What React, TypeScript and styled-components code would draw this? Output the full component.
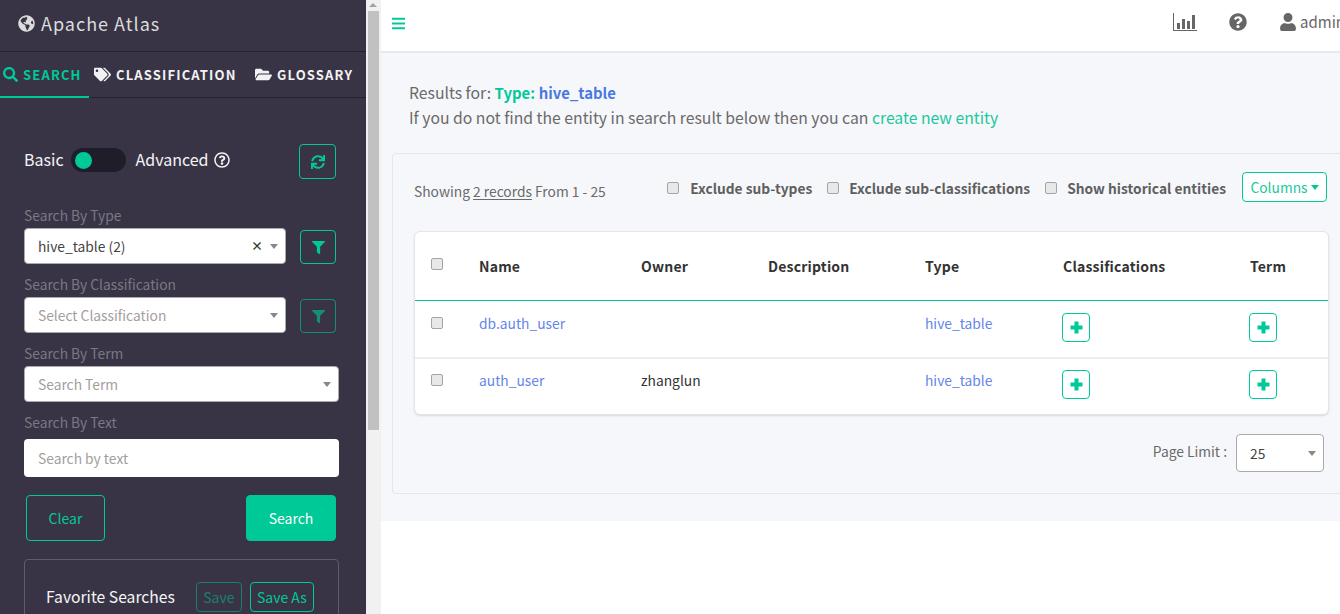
import styled, { createGlobalStyle } from "styled-components";
import {
  FaBars,
  FaFilter,
  FaFolderOpen,
  FaGlobeAmericas,
  FaQuestionCircle,
  FaRegQuestionCircle,
  FaSearch,
  FaSync,
  FaTags,
  FaUser,
} from "react-icons/fa";

const green = "#00c998";
const sidebarBg = "#383446";
const linkBlue = "#6485ea";
const grayText = "#6a6a6a";

const GlobalStyle = createGlobalStyle`
  html, body {
    margin: 0;
    padding: 0;
    height: 100%;
    overflow: hidden;
    background: #fff;
  }
  * {
    box-sizing: border-box;
  }
  body {
    font-family: "Noto Sans CJK SC", "Noto Sans", "Liberation Sans", sans-serif;
    font-size: 14px;
    line-height: 22px;
    color: ${grayText};
  }
`;

const Page = styled.div`
  display: flex;
  width: 1340px;
  height: 614px;
  overflow: hidden;
`;

const Sidebar = styled.aside`
  flex: 0 0 366px;
  height: 614px;
  overflow: hidden;
  background: ${sidebarBg};
  color: #fff;
`;

const Logo = styled.div`
  display: flex;
  align-items: center;
  gap: 6px;
  height: 52px;
  padding: 0 0 5px 18px;
  border-bottom: 1px solid #252330;
  color: #dcdcdc;
  font-size: 18px;
  letter-spacing: 1px;
  svg {
    font-size: 17px;
  }
`;

const Tabs = styled.nav`
  display: flex;
  height: 46px;
  border-bottom: 1px solid #252330;
`;

const Tab = styled.div<{ $active?: boolean; $width: number; $left: number; $icon: number }>`
  display: flex;
  align-items: center;
  gap: 5px;
  width: ${(p) => p.$width}px;
  height: 46px;
  padding: 1px 0 0 ${(p) => p.$left}px;
  font-size: 13px;
  font-weight: 700;
  letter-spacing: 1.15px;
  white-space: nowrap;
  color: ${(p) => (p.$active ? green : "#f2f2f2")};
  border-bottom: 2px solid ${(p) => (p.$active ? green : "transparent")};
  svg {
    font-size: ${(p) => p.$icon}px;
    flex: none;
  }
`;

const SideBody = styled.div`
  padding: 46px 27px 0 24px;
`;

const ToggleRow = styled.div`
  display: flex;
  align-items: center;
  height: 32px;
  margin-bottom: 28px;
  font-size: 16px;
  color: #f4f4f4;
`;

const ToggleLabel = styled.span`
  margin-bottom: 2px;
`;

const Toggle = styled.div`
  display: flex;
  align-items: center;
  width: 55px;
  height: 24px;
  margin: 0 10px 0 7px;
  padding-left: 4px;
  border-radius: 12px;
  background: #1f1d2a;
  &::before {
    content: "";
    width: 17px;
    height: 17px;
    border-radius: 50%;
    background: ${green};
  }
`;

const HelpIcon = styled(FaRegQuestionCircle)`
  margin-left: 5px;
  font-size: 16px;
`;

const IconButton = styled.button<{ $dim?: boolean }>`
  display: flex;
  align-items: center;
  justify-content: center;
  flex: none;
  width: 36px;
  height: 34px;
  margin-left: 14px;
  padding: 0;
  border: 1px solid ${green};
  border-radius: 4px;
  background: transparent;
  color: ${green};
  font-size: 13px;
  opacity: ${(p) => (p.$dim ? 0.6 : 1)};
`;

const RefreshButton = styled(IconButton)`
  align-self: flex-start;
  width: 37px;
  height: 35px;
  margin: 0 3px 0 auto;
  font-size: 14px;
`;

const FieldLabel = styled.div`
  height: 22px;
  font-size: 13.8px;
  line-height: 22px;
  color: #7b7882;
`;

const FieldRow = styled.div`
  display: flex;
  align-items: flex-end;
  margin: 2px 0 9px;
`;

const Select = styled.div<{ $width?: number }>`
  display: flex;
  align-items: center;
  flex: none;
  width: ${(p) => p.$width ?? 262}px;
  height: 36px;
  padding: 0 7px 0 13px;
  border: 1px solid #aaa;
  border-radius: 4px;
  background: #fff;
  font-size: 13.8px;
  color: #444;
`;

const SelectValue = styled.span<{ $placeholder?: boolean }>`
  flex: 1;
  color: ${(p) => (p.$placeholder ? "#a29e9e" : "#444")};
`;

const ClearMark = styled.span`
  margin-right: 7px;
  font-size: 12px;
  font-weight: 700;
  color: #333;
`;

const Caret = styled.span`
  width: 0;
  height: 0;
  border-left: 4px solid transparent;
  border-right: 4px solid transparent;
  border-top: 5px solid #888;
`;

const TextInput = styled.input`
  display: block;
  width: 315px;
  height: 38px;
  margin-top: 6px;
  padding: 0 14px;
  border: 0;
  border-radius: 4px;
  background: #fff;
  font: inherit;
  font-size: 13.8px;
  &::placeholder {
    color: #a29e9e;
    opacity: 1;
  }
`;

const SearchActions = styled.div`
  display: flex;
  justify-content: space-between;
  width: 310px;
  margin: 18px 0 18px 2px;
`;

const ActionButton = styled.button<{ $solid?: boolean }>`
  width: ${(p) => (p.$solid ? 90 : 79)}px;
  height: 46px;
  padding: 0;
  border: 1px solid ${green};
  border-radius: 4px;
  background: ${(p) => (p.$solid ? green : "transparent")};
  color: ${(p) => (p.$solid ? "#fff" : green)};
  font: inherit;
  font-size: 14px;
`;

const FavoritePanel = styled.section`
  display: flex;
  align-items: center;
  width: 315px;
  height: 80px;
  padding: 0 0 4px 21px;
  border: 1px solid #5f5d66;
  border-radius: 4px;
  color: #f6f6f6;
  font-size: 15.7px;
`;

const SmallButton = styled.button<{ $dim?: boolean; $width: number }>`
  width: ${(p) => p.$width}px;
  height: 30px;
  margin-left: ${(p) => (p.$dim ? 21 : 8)}px;
  padding: 0;
  border: 1px solid ${green};
  border-radius: 4px;
  background: transparent;
  color: ${green};
  font: inherit;
  font-size: 14px;
  opacity: ${(p) => (p.$dim ? 0.5 : 1)};
`;

const Scrollbar = styled.div`
  position: relative;
  flex: 0 0 15px;
  height: 614px;
  padding: 11px 2px 0 2px;
  background: #f1f1f1;
  &::before {
    content: "";
    position: absolute;
    top: 3px;
    left: 3px;
    border-left: 4px solid transparent;
    border-right: 4px solid transparent;
    border-bottom: 4px solid #a3a3a3;
  }
`;

const ScrollThumb = styled.div`
  height: 419px;
  background: #c1c1c1;
`;

const Main = styled.main`
  flex: 1;
  min-width: 0;
  overflow: hidden;
  background: #fff;
`;

const TopBar = styled.header`
  display: flex;
  align-items: center;
  height: 53px;
  padding: 0 0 7px 10px;
  border-bottom: 2px solid #e8e8ee;
  color: #666;
`;

const MenuIcon = styled(FaBars)`
  margin: 3px auto 0 0;
  color: ${green};
  font-size: 15px;
`;

const TopIcon = styled.span<{ $right: number }>`
  display: flex;
  margin-right: ${(p) => p.$right}px;
  font-size: 18px;
`;

const Admin = styled.span`
  display: flex;
  align-items: center;
  gap: 3px;
  width: 61px;
  flex: none;
  font-size: 15px;
  white-space: nowrap;
  svg {
    flex: none;
    font-size: 18px;
  }
`;

const Content = styled.div`
  height: 468px;
  padding: 27px 0 0 11px;
  background: #f6f7fb;
`;

const ResultInfo = styled.div`
  padding-left: 17px;
  font-size: 15.75px;
  line-height: 25px;
  margin-bottom: 23px;
`;

const TypeKey = styled.strong`
  color: ${green};
  font-size: 14.9px;
  font-weight: 700;
`;

const TypeValue = styled.strong`
  color: #4a78e2;
  font-size: 14.9px;
  font-weight: 700;
`;

const GreenLink = styled.a`
  color: #1cc79d;
`;

const ResultCard = styled.section`
  width: 970px;
  height: 341px;
  padding: 18px 0 0 21px;
  border: 1px solid #e5e5eb;
  border-radius: 4px;
`;

const Toolbar = styled.div`
  display: flex;
  align-items: flex-start;
  width: 913px;
  height: 59px;
`;

const Showing = styled.div`
  margin-top: 8px;
  margin-right: auto;
  font-size: 13.8px;
  u {
    text-underline-offset: 2px;
  }
`;

const CheckLabel = styled.label`
  display: flex;
  align-items: center;
  height: 32px;
  margin-right: 15px;
  font-size: 13.75px;
  font-weight: 700;
  color: #5f5f5f;
  white-space: nowrap;
`;

const Check = styled.input.attrs({ type: "checkbox" })<{ $gap?: number; $top?: number }>`
  appearance: none;
  display: block;
  flex: none;
  width: 12px;
  height: 12px;
  margin: ${(p) => p.$top ?? 0}px ${(p) => p.$gap ?? 0}px 0 0;
  border: 1px solid #a5a5a5;
  border-radius: 2px;
  background: #e8e8e8;
`;

const ColumnsButton = styled.button`
  display: flex;
  align-items: center;
  justify-content: center;
  gap: 3px;
  flex: none;
  width: 85px;
  height: 30px;
  margin-left: 1px;
  padding: 0;
  border: 1px solid ${green};
  border-radius: 4px;
  background: #fff;
  color: #1cc79d;
  font: inherit;
  font-size: 13.8px;
  &::after {
    content: "";
    border-left: 4px solid transparent;
    border-right: 4px solid transparent;
    border-top: 5px solid ${green};
  }
`;

const TableWrap = styled.div`
  width: 915px;
  background: #fff;
  border: 1px solid #e4e4ea;
  border-radius: 6px;
  box-shadow: 0 1px 2px rgba(0, 0, 0, 0.12);
  overflow: hidden;
`;

const Table = styled.table`
  width: 914px;
  table-layout: fixed;
  border-collapse: separate;
  border-spacing: 0;
`;

const HeadCell = styled.th`
  height: 69px;
  padding: 0 16px;
  border-bottom: 1px solid ${green};
  text-align: left;
  font-size: 14px;
  font-weight: 700;
  color: #333;
  letter-spacing: 0.2px;
  white-space: nowrap;
`;

const HeadCheckCell = styled(HeadCell)`
  padding-bottom: 4px;
`;

const Cell = styled.td`
  height: 56px;
  padding: 12px 16px 0;
  vertical-align: top;
  font-size: 13.8px;
  line-height: 20px;
  color: #333;
`;

const Row = styled.tr`
  & + & ${Cell} {
    height: 57px;
    padding-top: 11px;
    border-top: 2px solid #eeeeee;
  }
`;

const EntityLink = styled.a`
  color: ${linkBlue};
`;

const PlusButton = styled.button`
  display: flex;
  align-items: center;
  justify-content: center;
  width: 28px;
  height: 29px;
  margin: 0 0 0 -1px;
  padding: 0;
  border: 1px solid ${green};
  border-radius: 4px;
  background: #fff;
  color: ${green};
`;

const PageLimit = styled.div`
  display: flex;
  align-items: center;
  justify-content: flex-end;
  gap: 9px;
  width: 910px;
  margin-top: 19px;
`;

const LimitLabel = styled.span`
  margin-bottom: 4px;
  font-size: 13.8px;
`;

const LimitSelect = styled(Select)`
  width: 88px;
  height: 38px;
`;

const StatsIcon = () => (
  <svg width="24" height="18" viewBox="0 0 24 18" fill="currentColor">
    <path d="M0 0h1v17h23v1H0z" />
    <rect x="4" y="10" width="3" height="6" />
    <rect x="9" y="6" width="3" height="10" />
    <rect x="14" y="8" width="3" height="8" />
    <rect x="19" y="2" width="3" height="14" />
  </svg>
);

const PlusIcon = () => (
  <svg width="13" height="13" viewBox="0 0 13 13" fill="currentColor">
    <path d="M4.5 0.5h4v4h4v4h-4v4h-4v-4h-4v-4h4z" />
  </svg>
);

const rows = [
  { name: "db.auth_user", owner: "" },
  { name: "auth_user", owner: "zhanglun" },
];

const columnWidths = [48, 162, 127, 157, 138, 187, 95];

export default function App() {
  return (
    <Page>
      <GlobalStyle />
      <Sidebar>
        <Logo>
          <FaGlobeAmericas />
          Apache Atlas
        </Logo>
        <Tabs>
          <Tab $active $width={89} $left={3} $icon={15}>
            <FaSearch />
            SEARCH
          </Tab>
          <Tab $width={161} $left={5} $icon={17}>
            <FaTags />
            CLASSIFICATION
          </Tab>
          <Tab $width={116} $left={5} $icon={17}>
            <FaFolderOpen />
            GLOSSARY
          </Tab>
        </Tabs>
        <SideBody>
          <ToggleRow>
            <ToggleLabel>Basic</ToggleLabel>
            <Toggle />
            <ToggleLabel>Advanced</ToggleLabel>
            <HelpIcon />
            <RefreshButton>
              <FaSync />
            </RefreshButton>
          </ToggleRow>

          <FieldLabel>Search By Type</FieldLabel>
          <FieldRow>
            <Select>
              <SelectValue>hive_table (2)</SelectValue>
              <ClearMark>×</ClearMark>
              <Caret />
            </Select>
            <IconButton>
              <FaFilter />
            </IconButton>
          </FieldRow>

          <FieldLabel>Search By Classification</FieldLabel>
          <FieldRow>
            <Select>
              <SelectValue $placeholder>Select Classification</SelectValue>
              <Caret />
            </Select>
            <IconButton $dim>
              <FaFilter />
            </IconButton>
          </FieldRow>

          <FieldLabel>Search By Term</FieldLabel>
          <FieldRow>
            <Select $width={315}>
              <SelectValue $placeholder>Search Term</SelectValue>
              <Caret />
            </Select>
          </FieldRow>

          <FieldLabel>Search By Text</FieldLabel>
          <TextInput placeholder="Search by text" />

          <SearchActions>
            <ActionButton>Clear</ActionButton>
            <ActionButton $solid>Search</ActionButton>
          </SearchActions>

          <FavoritePanel>
            Favorite Searches
            <SmallButton $dim $width={46}>
              Save
            </SmallButton>
            <SmallButton $width={64}>Save As</SmallButton>
          </FavoritePanel>
        </SideBody>
      </Sidebar>

      <Scrollbar>
        <ScrollThumb />
      </Scrollbar>

      <Main>
        <TopBar>
          <MenuIcon />
          <TopIcon $right={32}>
            <StatsIcon />
          </TopIcon>
          <TopIcon $right={32}>
            <FaQuestionCircle />
          </TopIcon>
          <Admin>
            <FaUser />
            admin
          </Admin>
        </TopBar>
        <Content>
          <ResultInfo>
            Results for: <TypeKey>Type:</TypeKey> <TypeValue>hive_table</TypeValue>
            <br />
            If you do not find the entity in search result below then you can{" "}
            <GreenLink>create new entity</GreenLink>
          </ResultInfo>
          <ResultCard>
            <Toolbar>
              <Showing>
                Showing <u>2 records</u> From 1 - 25
              </Showing>
              <CheckLabel>
                <Check $gap={11} />
                Exclude sub-types
              </CheckLabel>
              <CheckLabel>
                <Check $gap={10} />
                Exclude sub-classifications
              </CheckLabel>
              <CheckLabel>
                <Check $gap={10} />
                Show historical entities
              </CheckLabel>
              <ColumnsButton>Columns</ColumnsButton>
            </Toolbar>
            <TableWrap>
              <Table>
                <colgroup>
                  {columnWidths.map((w, i) => (
                    <col key={i} width={w} />
                  ))}
                </colgroup>
                <thead>
                  <tr>
                    <HeadCheckCell>
                      <Check />
                    </HeadCheckCell>
                    <HeadCell>Name</HeadCell>
                    <HeadCell>Owner</HeadCell>
                    <HeadCell>Description</HeadCell>
                    <HeadCell>Type</HeadCell>
                    <HeadCell>Classifications</HeadCell>
                    <HeadCell>Term</HeadCell>
                  </tr>
                </thead>
                <tbody>
                  {rows.map((row) => (
                    <Row key={row.name}>
                      <Cell>
                        <Check $top={4} />
                      </Cell>
                      <Cell>
                        <EntityLink>{row.name}</EntityLink>
                      </Cell>
                      <Cell>{row.owner}</Cell>
                      <Cell />
                      <Cell>
                        <EntityLink>hive_table</EntityLink>
                      </Cell>
                      <Cell>
                        <PlusButton>
                          <PlusIcon />
                        </PlusButton>
                      </Cell>
                      <Cell>
                        <PlusButton>
                          <PlusIcon />
                        </PlusButton>
                      </Cell>
                    </Row>
                  ))}
                </tbody>
              </Table>
            </TableWrap>
            <PageLimit>
              <LimitLabel>Page Limit :</LimitLabel>
              <LimitSelect>
                <SelectValue>25</SelectValue>
                <Caret />
              </LimitSelect>
            </PageLimit>
          </ResultCard>
        </Content>
      </Main>
    </Page>
  );
}
